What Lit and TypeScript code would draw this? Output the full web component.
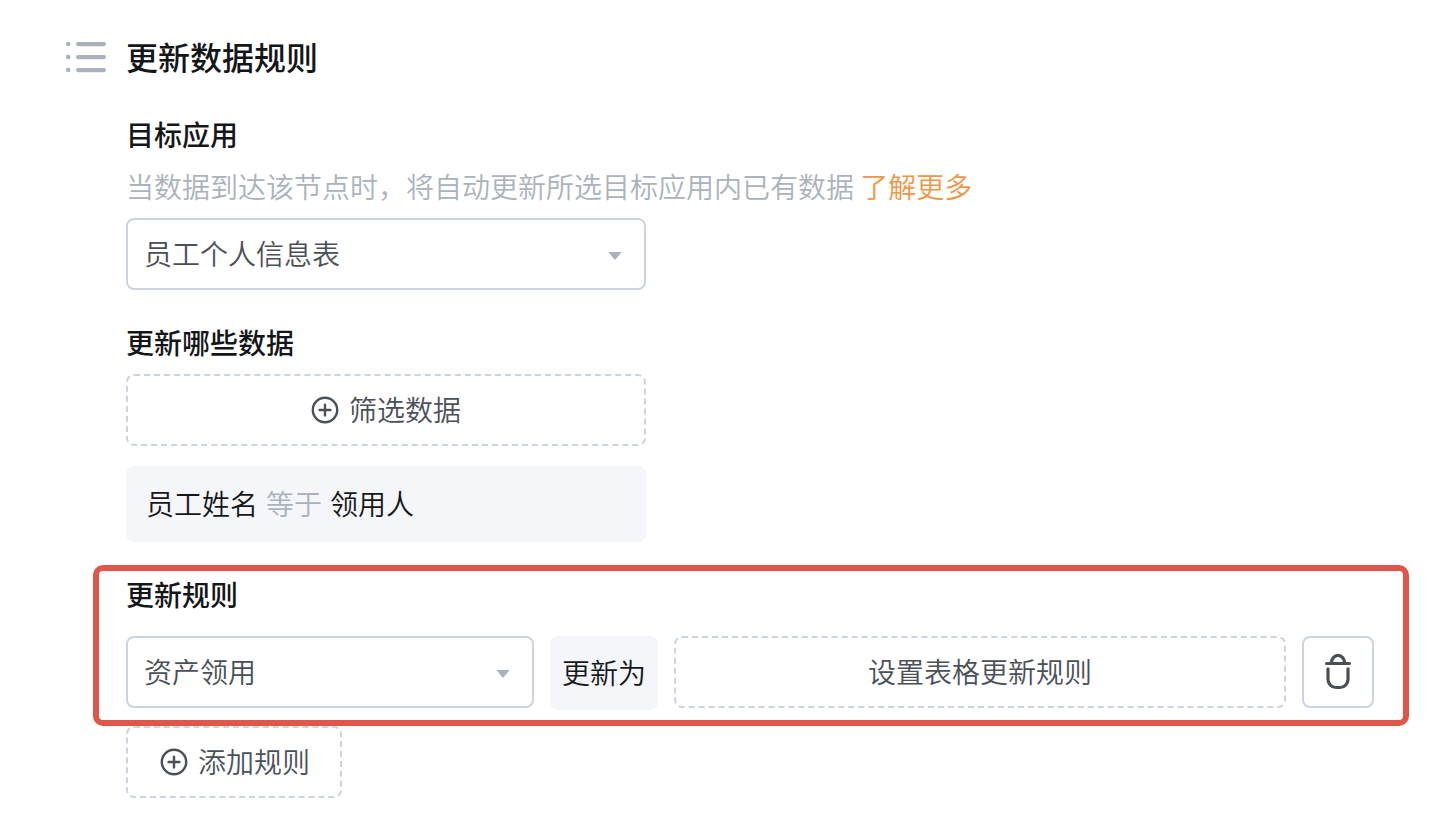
import { LitElement, html, css, svg } from "lit";
import { customElement, state } from "lit/decorators.js";

const listIcon = svg`<svg class="list-icon" width="40" height="32" viewBox="0 0 40 32" aria-hidden="true">
  <g fill="#abb2bd">
    <circle cx="2.2" cy="3" r="2.3"/><circle cx="2.2" cy="16" r="2.3"/><circle cx="2.2" cy="29" r="2.3"/>
    <rect x="10" y="1" width="30" height="4.2" rx="2.1"/>
    <rect x="10" y="14" width="30" height="4.2" rx="2.1"/>
    <rect x="10" y="27" width="30" height="4.2" rx="2.1"/>
  </g>
</svg>`;

const plusIcon = svg`<svg width="28" height="28" viewBox="0 0 28 28" fill="none" stroke="#4b5058" stroke-linecap="round" aria-hidden="true">
  <circle cx="14" cy="14" r="12.2" stroke-width="2.4"/>
  <path d="M8.6 14h10.8M14 8.6v10.8" stroke-width="2.4"/>
</svg>`;

const trashIcon = svg`<svg width="28" height="40" viewBox="0 0 28 40" fill="none" stroke="#4b5058" stroke-linecap="round" stroke-linejoin="round" aria-hidden="true">
  <path d="M2.500 11.600h23" stroke-width="3"/>
  <path d="M7.400 10.800a6.600 7.400 0 0 1 13.200 0" stroke-width="3.200"/>
  <path d="M4 16.800V27.500a8 8 0 0 0 8 8h4a8 8 0 0 0 8-8V16.800" stroke-width="3.200"/>
</svg>`;

const caret = svg`<svg class="caret" width="14" height="8" viewBox="0 0 14 8" aria-hidden="true"><path d="M.3 0h13.400L7 8z" fill="#abb2bd"/></svg>`;

@customElement("app-root")
export class AppRoot extends LitElement {
  @state() private target = "员工个人信息表";
  @state() private field = "资产领用";

  static styles = css`
    :host {
      display: block;
      background: #fff;
      color: #141618;
      font-family: "Noto Sans CJK SC", sans-serif;
      font-size: 28px;
      font-weight: 350;
      line-height: 40px;
    }
    * { box-sizing: border-box; }
    main {
      display: grid;
      grid-template-columns: 40px minmax(0, 1fr);
      column-gap: 20px;
      padding: 32px 60px 18px 66px;
    }
    .list-icon { margin-top: 9px; }
    h1, h2, p { margin: 0; }
    h1 { font-size: 32px; font-weight: 500; line-height: 48px; }
    h2 { font-size: 28px; font-weight: 500; line-height: 40px; }
    svg { display: block; flex: none; }
    .body { grid-column: 2; margin-top: 34px; }
    .narrow { max-width: 520px; }
    .hint { margin: 12px 0; color: #abb2bd; }
    a { color: #f09646; text-decoration: none; }
    .select { position: relative; }
    select, button {
      height: 72px;
      margin: 0;
      border: 2px solid #ccd3e1;
      border-radius: 8px;
      background: #fff;
      color: #4b5058;
      font: inherit;
      cursor: pointer;
    }
    select {
      display: block;
      width: 100%;
      padding: 0 48px 2px 16px;
      appearance: none;
    }
    .caret { position: absolute; right: 24px; top: 34px; pointer-events: none; }
    button {
      display: flex;
      align-items: center;
      justify-content: center;
      gap: 10px;
      padding: 0;
    }
    button span { padding-bottom: 2px; }
    .dashed { border-style: dashed; }
    .filter { margin-top: 32px; }
    .filter button { width: 100%; margin-top: 12px; }
    .condition {
      display: flex;
      gap: 8px;
      margin-top: 20px;
      padding: 17px 20px 19px;
      border-radius: 8px;
      background: #f4f6fa;
    }
    .operator { color: #abb2bd; }
    .rules { position: relative; margin-top: 32px; }
    .rules::after {
      content: "";
      position: absolute;
      inset: -9px -35px -16px -33px;
      border: 6px solid #de5748;
      border-radius: 10px;
      pointer-events: none;
    }
    .rule {
      display: grid;
      grid-template-columns: minmax(0, 2fr) auto minmax(0, 3fr) 72px;
      align-items: start;
      gap: 16px;
      margin-top: 22px;
    }
    .tag {
      padding: 16px 12px 18px;
      border-radius: 8px;
      background: #f4f6fa;
    }
    .add { margin-top: 16px; padding: 0 30px 0 32px; }
  `;

  render() {
    return html`
      <main>
        ${listIcon}
        <h1>更新数据规则</h1>
        <div class="body">
          <section>
            <h2 id="target-title">目标应用</h2>
            <p class="hint">当数据到达该节点时，将自动更新所选目标应用内已有数据 <a href="#more">了解更多</a></p>
            <div class="select narrow">
              <select aria-labelledby="target-title"
                @change=${(e: Event) => (this.target = (e.target as HTMLSelectElement).value)}>
                <option>${this.target}</option>
              </select>
              ${caret}
            </div>
          </section>
          <section class="filter narrow">
            <h2>更新哪些数据</h2>
            <button class="dashed" type="button">${plusIcon}<span>筛选数据</span></button>
            <div class="condition">
              <span>员工姓名</span><span class="operator">等于</span><span>领用人</span>
            </div>
          </section>
          <section class="rules">
            <h2 id="rules-title">更新规则</h2>
            <div class="rule">
              <div class="select">
                <select aria-labelledby="rules-title"
                  @change=${(e: Event) => (this.field = (e.target as HTMLSelectElement).value)}>
                  <option>${this.field}</option>
                </select>
                ${caret}
              </div>
              <span class="tag">更新为</span>
              <button class="dashed" type="button"><span>设置表格更新规则</span></button>
              <button type="button" aria-label="删除">${trashIcon}</button>
            </div>
          </section>
          <button class="dashed add" type="button">${plusIcon}<span>添加规则</span></button>
        </div>
      </main>
    `;
  }
}
